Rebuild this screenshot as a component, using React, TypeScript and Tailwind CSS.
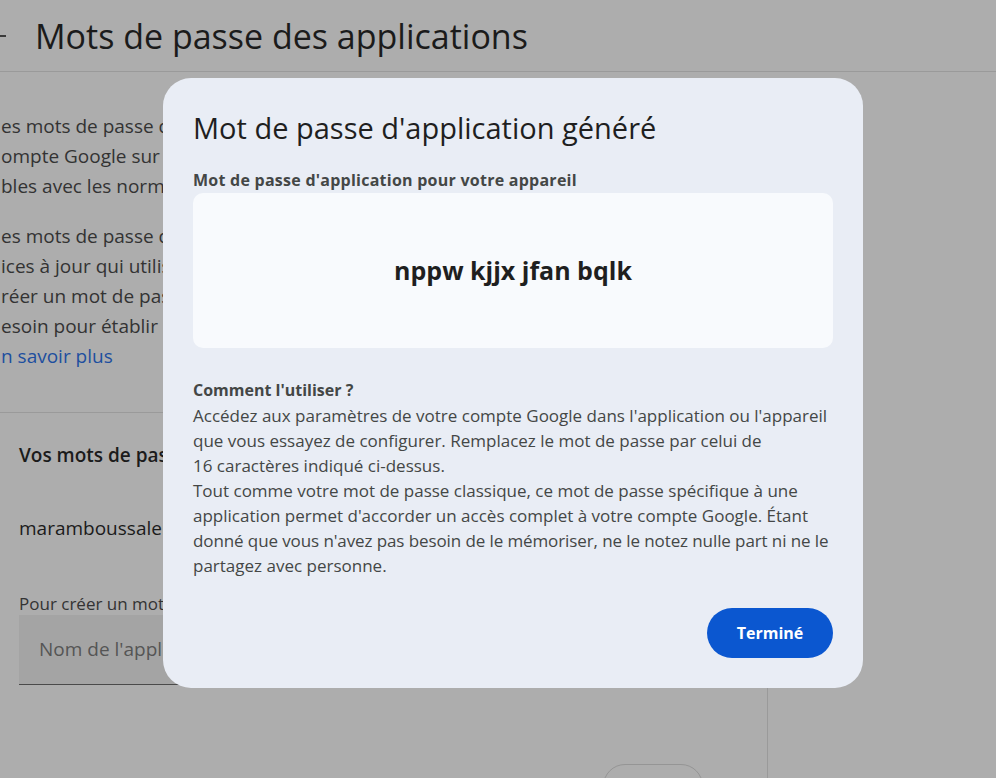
import React from "react";

export default function App() {
  return (
    <div
      className="relative w-[996px] h-[778px] overflow-hidden bg-[#adadad] text-[#1f1f1f]"
      style={{ fontFamily: "'Open Sans', Roboto, sans-serif" }}
    >
      {/* header */}
      <div className="h-[72px] border-b border-[#9a9a9a] flex items-center">
        <svg width="24" height="24" viewBox="0 0 24 24" className="ml-[-14px] mr-[25px] text-[#3a3a3a]">
          <path d="M20 11H7.83l5.59-5.59L12 4l-8 8 8 8 1.41-1.41L7.83 13H20v-2z" fill="currentColor" />
        </svg>
        <h1 className="text-[34px] leading-[42px] font-normal text-[#1b1b1b]">
          Mots de passe des applications
        </h1>
      </div>

      {/* body */}
      <div className="flex flex-col h-[705px] w-[768px]">
        <div className="pt-[39px] text-[19px] leading-[30px] text-[#333333] whitespace-nowrap">
          <div className="ml-[1px]">
            <div>es mots de passe des applications vous permettent de vous connecter</div>
            <div>ompte Google sur des applications et services plus anciens</div>
            <div>bles avec les normes de sécurité modernes.</div>
          </div>
          <div className="mt-[20px] ml-[1px]">
            <div>es mots de passe des applications sont moins sécurisés</div>
            <div>ices à jour qui utilisent des normes de sécurité</div>
            <div>réer un mot de passe d'application, vous devez</div>
            <div>esoin pour établir la connexion.</div>
            <div className="text-[#1d4f9f]">n savoir plus</div>
          </div>
        </div>

        <div className="mt-[41px] flex-1 border-t border-r border-[#9a9a9a] pl-[19px] whitespace-nowrap">
          <div className="mt-[29px] text-[19px] leading-[26px] font-semibold text-[#1b1b1b]">
            Vos mots de passe des applications
          </div>
          <div className="mt-[47px] text-[19px] leading-[26px] text-[#1b1b1b]">
            maramboussalem@gmail.com
          </div>
          <div className="mt-[52px] text-[17px] leading-[22px] text-[#333333]">
            Pour créer un mot de passe pour une application
          </div>
          <div className="w-[560px] h-[70px] bg-[#a4a4a4] border-b border-[#4a4a4a] flex items-center pl-[20px] text-[19px] text-[#555555]">
            Nom de l'application
          </div>
          <div className="mt-[79px] ml-[584px] w-[100px] h-[44px] rounded-full border border-[#959595]" />
        </div>
      </div>

      {/* modal */}
      <div className="absolute left-[163px] top-[78px] w-[700px] h-[610px] rounded-[28px] bg-[#e9edf5] px-[30px] flex flex-col">
        <h2 className="mt-[32px] text-[29px] leading-[36px] font-normal text-[#1f1f1f]">
          Mot de passe d'application généré
        </h2>
        <div className="mt-[22px] text-[16px] leading-[24px] font-bold tracking-[0.25px] text-[#444746]">
          Mot de passe d'application pour votre appareil
        </div>
        <div className="mt-[1px] h-[155px] rounded-[10px] bg-[#f8fafd] flex items-center justify-center">
          <span className="text-[25px] font-bold text-[#1f1f1f]">nppw kjjx jfan bqlk</span>
        </div>
        <div className="mt-[30px] text-[17px] leading-[25px] text-[#444746] whitespace-nowrap">
          <div className="font-bold text-[16px]">Comment l'utiliser ?</div>
          <div>
            Accédez aux paramètres de votre compte Google dans l'application ou l'appareil
            <br />
            que vous essayez de configurer. Remplacez le mot de passe par celui de
            <br />
            16 caractères indiqué ci-dessus.
          </div>
          <div>
            Tout comme votre mot de passe classique, ce mot de passe spécifique à une
            <br />
            application permet d'accorder un accès complet à votre compte Google. Étant
            <br />
            <span className="tracking-[-0.1px]">
              donné que vous n'avez pas besoin de le mémoriser, ne le notez nulle part ni ne le
            </span>
            <br />
            partagez avec personne.
          </div>
        </div>
        <div className="mt-[30px] flex justify-end">
          <button className="w-[126px] h-[50px] rounded-full bg-[#0b57d0] text-white text-[16px] font-bold">
            Terminé
          </button>
        </div>
      </div>
    </div>
  );
}
